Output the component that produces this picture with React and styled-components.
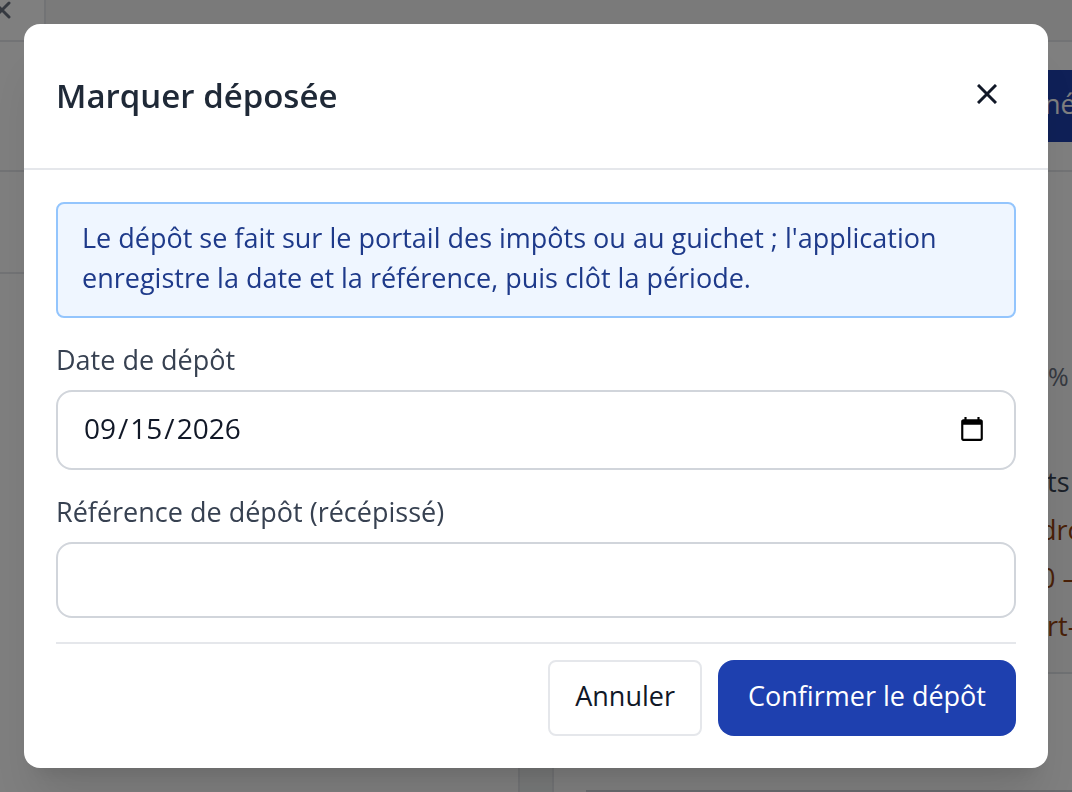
import React from 'react'
import styled, { createGlobalStyle } from 'styled-components'

const GlobalStyle = createGlobalStyle`
  *, *::before, *::after {
    box-sizing: border-box;
  }

  body {
    margin: 0;
    font-family: 'Open Sans', 'Noto Sans', sans-serif;
    font-size: 27px;
    line-height: 40px;
    color: #111827;
  }

  button, input {
    font: inherit;
    color: inherit;
  }
`

const Page = styled.div`
  display: flex;
  flex-direction: column;
  height: 100vh;
  overflow: hidden;
  background: #fff;
`

const TopBar = styled.header`
  display: flex;
  height: 42px;
  flex-shrink: 0;
  background: #f4f4f4;
  border-bottom: 2px solid #e5e7eb;
`

const MenuBox = styled.div`
  width: 46px;
  background: #fff;
  border-right: 2px solid #e5e7eb;

  svg {
    display: block;
  }
`

const Toolbar = styled.div`
  display: flex;
  justify-content: flex-end;
  align-items: center;
  height: 130px;
  flex-shrink: 0;
  overflow: hidden;
  border-bottom: 2px solid #e5e7eb;
`

const ToolbarButton = styled.button`
  width: 80px;
  height: 72px;
  padding: 0 0 4px 52px;
  border: 0;
  background: #1e40af;
  color: #fff;
  text-align: left;
`

const Columns = styled.main`
  display: grid;
  grid-template-columns: 520px 1fr;
  gap: 32px;
  flex: 1;
  min-height: 0;
  background: #f1f4f4;
`

const Column = styled.section`
  display: flex;
  flex-direction: column;
  overflow: hidden;
  background: #fff;
  border: 0 solid #e5e7eb;
  border-right-width: ${p => (p.$side === 'left' ? '2px' : 0)};
  border-left-width: ${p => (p.$side === 'right' ? '2px' : 0)};
`

const ColumnHead = styled.div`
  height: 102px;
  flex-shrink: 0;
  border-bottom: 2px solid #e5e7eb;
`

const Summary = styled.div`
  display: flex;
  flex-direction: column;
  align-items: flex-end;
  height: 394px;
  margin-top: 108px;
  flex-shrink: 0;
  background: #f8f8f8;
  border-bottom: 2px solid #dfe2e6;
`

const Rate = styled.div`
  width: 24px;
  padding: 76px 0 62px;
  font-size: 25px;
  color: #6b7280;
`

const Note = styled.div`
  width: 32px;
  height: 48px;
  line-height: 48px;
  white-space: pre;
  color: ${p => (p.$warn ? '#92400e' : '#374151')};
`

const NextCard = styled.div`
  margin: 116px 0 0 32px;
  height: 40px;
  flex-shrink: 0;
  border-top: 2px solid #d1d5db;
`

const Overlay = styled.div`
  position: fixed;
  inset: 0;
  display: flex;
  align-items: center;
  justify-content: center;
  padding: 24px;
  background: rgba(0, 0, 0, 0.5);
`

const Dialog = styled.div`
  width: 100%;
  max-width: 1024px;
  background: #fff;
  border-radius: 16px;
  box-shadow: 0 40px 50px -10px rgba(0, 0, 0, 0.1), 0 16px 20px -12px rgba(0, 0, 0, 0.1);
`

const DialogHeader = styled.div`
  display: flex;
  align-items: center;
  justify-content: space-between;
  padding: 48px 32px;
  border-bottom: 2px solid #e5e7eb;
`

const Title = styled.h2`
  margin: 0;
  font-size: 33px;
  line-height: 48px;
  font-weight: 600;
  color: #1f2937;
`

const CloseButton = styled.button`
  display: flex;
  align-items: center;
  justify-content: center;
  width: 58px;
  height: 48px;
  padding: 0 0 4px;
  border: 0;
  background: none;
`

const Form = styled.form`
  display: flex;
  flex-direction: column;
  gap: 24px;
  padding: 32px;
`

const Notice = styled.p`
  margin: 0;
  padding: 14px 24px 18px;
  border: 2px solid #93c5fd;
  border-radius: 8px;
  background: #eff6ff;
  color: #1e3a8a;
`

const Field = styled.div`
  display: flex;
  flex-direction: column;
  gap: 12px;
`

const Label = styled.label`
  line-height: 36px;
  color: #374151;
`

const Input = styled.input`
  width: 100%;
  height: ${p => (p.type === 'date' ? '80px' : '76px')};
  padding: 14px 26px 18px 24px;
  border: 2px solid #d1d5db;
  border-radius: 16px;
  background: #fff;
  font-size: 28px;
  outline: none;

  &::-webkit-datetime-edit-month-field,
  &::-webkit-datetime-edit-day-field,
  &::-webkit-datetime-edit-year-field {
    padding: 0 2px;
  }

  &::-webkit-calendar-picker-indicator {
    margin-top: 4px;
  }
`

const Actions = styled.div`
  display: flex;
  justify-content: flex-end;
  gap: 16px;
  padding-top: 16px;
  border-top: 2px solid #e5e7eb;
`

const Button = styled.button`
  height: 76px;
  padding: ${p => (p.$primary ? '0 30px 4px' : '0 25px 4px')};
  border: ${p => (p.$primary ? '0' : '2px solid #e5e7eb')};
  border-radius: ${p => (p.$primary ? '16px' : '8px')};
  background: ${p => (p.$primary ? '#1e40af' : '#fff')};
  color: ${p => (p.$primary ? '#fff' : '#111827')};
`

const notes = [
  { text: ' ts' },
  { text: 'dro', warn: true },
  { text: '0 —', warn: true },
  { text: ' rt-', warn: true }
]

class App extends React.Component {
  state = {
    date: '2026-09-15',
    reference: ''
  }

  handleDate = e => {
    this.setState({ date: e.target.value })
  }

  handleReference = e => {
    this.setState({ reference: e.target.value })
  }

  handleSubmit = e => {
    e.preventDefault()
  }

  render() {
    const { date, reference } = this.state

    return (
      <>
        <GlobalStyle />
        <Page aria-hidden="true">
          <TopBar>
            <MenuBox>
              <svg width="12" height="20" fill="none" stroke="#6b7280" strokeWidth="3" strokeLinecap="round">
                <path d="M-5 3L9 17M9 3L-5 17" />
              </svg>
            </MenuBox>
          </TopBar>
          <Toolbar>
            <ToolbarButton tabIndex={-1}>né</ToolbarButton>
          </Toolbar>
          <Columns>
            <Column $side="left">
              <ColumnHead />
            </Column>
            <Column $side="right">
              <Summary>
                <Rate>%</Rate>
                {notes.map(note => (
                  <Note key={note.text} $warn={note.warn}>
                    {note.text}
                  </Note>
                ))}
              </Summary>
              <NextCard />
            </Column>
          </Columns>
        </Page>
        <Overlay>
          <Dialog role="dialog" aria-modal="true" aria-labelledby="dialog-title">
            <DialogHeader>
              <Title id="dialog-title">Marquer déposée</Title>
              <CloseButton type="button" aria-label="Fermer">
                <svg width="20" height="20" fill="none" stroke="#111827" strokeWidth="3">
                  <path d="M1 1L19 19M19 1L1 19" />
                </svg>
              </CloseButton>
            </DialogHeader>
            <Form onSubmit={this.handleSubmit}>
              <Notice>
                Le dépôt se fait sur le portail des impôts ou au guichet ; l'application enregistre la date et la
                référence, puis clôt la période.
              </Notice>
              <Field>
                <Label htmlFor="date">Date de dépôt</Label>
                <Input id="date" type="date" value={date} onChange={this.handleDate} />
              </Field>
              <Field>
                <Label htmlFor="reference">Référence de dépôt (récépissé)</Label>
                <Input id="reference" type="text" value={reference} onChange={this.handleReference} />
              </Field>
              <Actions>
                <Button type="button">Annuler</Button>
                <Button type="submit" $primary>
                  Confirmer le dépôt
                </Button>
              </Actions>
            </Form>
          </Dialog>
        </Overlay>
      </>
    )
  }
}

export default App
